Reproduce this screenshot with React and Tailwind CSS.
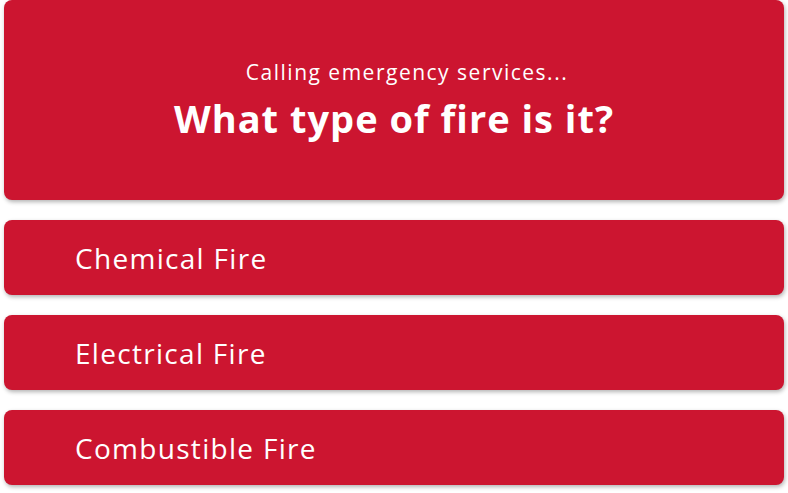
export default function App() {
  const options = ['Chemical Fire', 'Electrical Fire', 'Combustible Fire'];
  return (
    <div
      className="w-[788px] h-[493px] bg-white px-1 flex flex-col gap-5 text-white"
      style={{ fontFamily: '"Open Sans", "Liberation Sans", sans-serif' }}
    >
      <div className="h-[200px] shrink-0 rounded-lg bg-[#cc1530] shadow-[1px_2px_4px_rgba(0,0,0,0.3)] flex flex-col items-center justify-center">
        <p className="ml-[26px] text-[21px] leading-6 font-medium tracking-[1.5px]">Calling emergency services...</p>
        <h1 className="mt-3 text-[38px] leading-[44px] font-bold tracking-[1px]">What type of fire is it?</h1>
      </div>
      {options.map((o) => (
        <button
          key={o}
          className="h-[75px] shrink-0 rounded-lg bg-[#cc1530] shadow-[1px_2px_4px_rgba(0,0,0,0.3)] flex items-center pl-[71px] text-[28px] font-medium tracking-[1.3px] text-left"
        >
          {o}
        </button>
      ))}
    </div>
  );
}
